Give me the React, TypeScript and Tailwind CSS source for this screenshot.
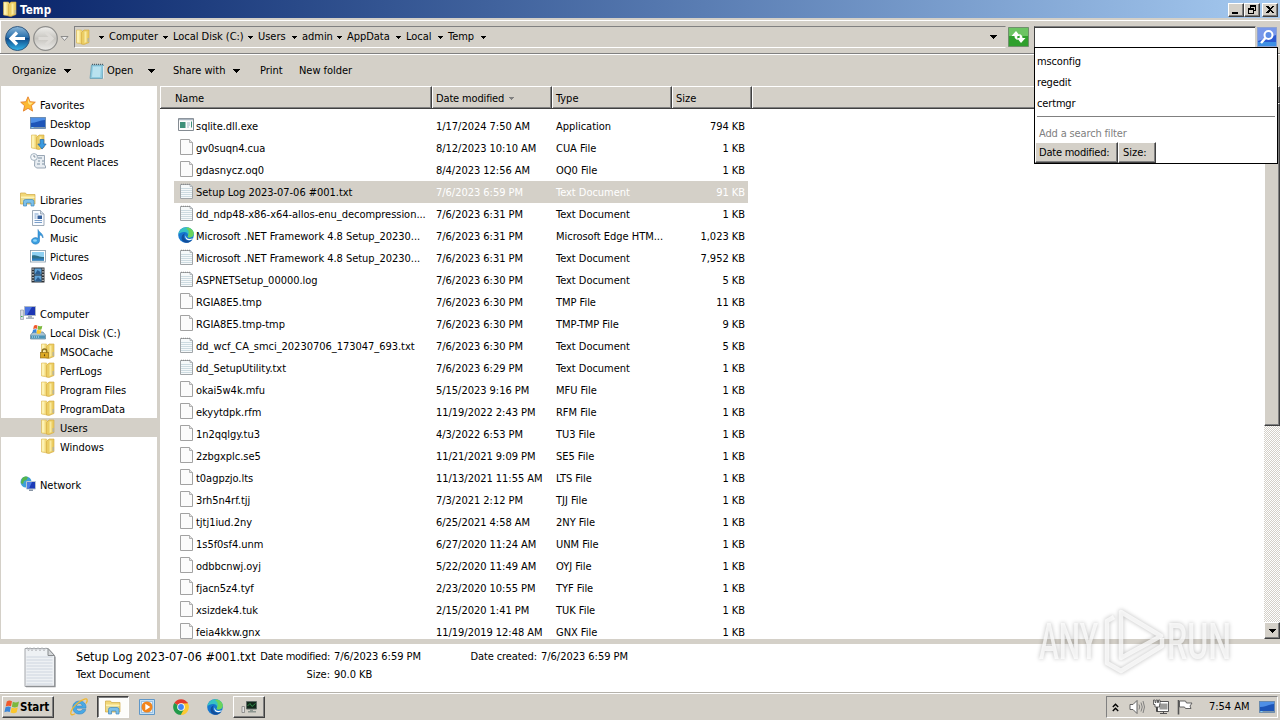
import type { ReactNode } from "react";

type IconProps = { className?: string };

const raised = "border border-t-white border-l-white border-r-[#404040] border-b-[#404040] bg-[#d4d0c8] shadow-[inset_-1px_-1px_0_#808080]";

function FolderIcon({ className = "size-4" }: IconProps) {
  return (
    <svg viewBox="0 0 16 16" className={className}>
      <path d="M1.500 1h5l1 2v12l-6-1z" fill="#f3da7c" stroke="#dcb858" strokeWidth=".6" />
      <path d="M2 1.500h2.500v12H2z" fill="#fdf2b4" />
      <path d="M6.500 3.500 9 1h5v12.500l-5 2-2.500-.5z" fill="#ebcd63" stroke="#d1a63c" strokeWidth=".6" />
      <path d="M9.500 2.500h2V13l-2 1z" fill="#faeaa0" />
      <path d="M12.500 9h1.500v4h-1.500z" fill="#b9b59a" />
    </svg>
  );
}

function LockedFolderIcon() {
  return (
    <span className="relative flex size-4">
      <FolderIcon />
      <svg viewBox="0 0 10 12" className="absolute bottom-0 left-0 h-3 w-[9px]">
        <path d="M2.500 6V4a2.500 2.500 0 0 1 5 0v2" fill="none" stroke="#8f7322" strokeWidth="1.500" />
        <rect x=".5" y="5.500" width="9" height="6" fill="#dca925" stroke="#9a741a" strokeWidth=".8" />
        <path d="M5 7.500v2" stroke="#5d430c" strokeWidth="1.200" />
      </svg>
    </span>
  );
}

function StarIcon() {
  return (
    <svg viewBox="0 0 16 16" className="size-4">
      <path d="m8 .8 2.100 4.900 5.200.5-3.900 3.500 1.200 5.400L8 12.300l-4.600 2.800 1.200-5.400L.7 6.200l5.200-.5z" fill="#fcb931" stroke="#e5812b" strokeWidth=".9" />
      <path d="m8 2.500 1.500 4 3.500.2-3 2.300-2-2z" fill="#ffe68b" />
    </svg>
  );
}

function DesktopIcon({ className = "size-4" }: IconProps) {
  return (
    <svg viewBox="0 0 16 16" className={className}>
      <rect x=".5" y="2.500" width="15" height="11" fill="#1d55b8" stroke="#6688aa" strokeWidth=".8" />
      <path d="M1 3h14v2C10 5 6 8 1 8z" fill="#4e8fe6" />
      <path d="M1 12h14v1.500H1z" fill="#7e97ad" />
      <path d="M1.500 12h2v1h-2z" fill="#7fd0ff" />
    </svg>
  );
}

function DownloadsIcon() {
  return (
    <span className="relative flex size-4">
      <FolderIcon />
      <svg viewBox="0 0 10 12" className="absolute -right-px bottom-0 h-[11px] w-[10px]">
        <path d="M3 .5h4v5h2.500L5 11 .5 5.500H3z" fill="#3a9be0" stroke="#1f64ac" strokeWidth=".8" />
      </svg>
    </span>
  );
}

function RecentIcon() {
  return (
    <svg viewBox="0 0 16 16" className="size-4">
      <path d="M5 2.500h9.500v9.500l1 1v2H6.500l-2-2z" fill="#e8edf2" stroke="#8393a3" strokeWidth=".8" />
      <path d="M8 5h4M8 8h2m2 0h2M7 11h3m2 0h2" stroke="#7b8fa1" />
      <circle cx="4" cy="4" r="3.400" fill="#f7f9fb" stroke="#8fa2b3" strokeWidth=".8" />
      <path d="M4 2v2h1.500" fill="none" stroke="#55697c" strokeWidth=".7" />
    </svg>
  );
}

function LibraryIcon({ className = "size-4" }: IconProps) {
  return (
    <svg viewBox="0 0 16 16" className={className}>
      <path d="M.5 2h5l1 1.500H15v9.500H.5z" fill="#f2d878" stroke="#cfa842" strokeWidth=".7" />
      <path d="M1 5.500h13.500V7H1z" fill="#fff2b5" />
      <path d="M1.500 7h12v4h-12z" fill="#e4dc98" />
      <path d="M3.500 15v-4.500q0-2 2-2h6.500q2 0 2 2V15h-3v-3H6.500v3z" fill="#7cc0ea" stroke="#3f87bd" strokeWidth=".7" />
    </svg>
  );
}

function DocumentsIcon() {
  return (
    <svg viewBox="0 0 16 16" className="size-4">
      <path d="M2.500.5h8l3.500 3.500v11.500H2.500z" fill="#f8fbff" stroke="#8796a6" strokeWidth=".8" />
      <path d="M10.500.5v3.500H14" fill="#d4dee8" stroke="#8796a6" strokeWidth=".7" />
      <path d="M4.500 4h4M4.500 6h2M4.500 8h2M4.500 10.500h7.500M4.500 12.500h7.500" stroke="#6c94c4" strokeWidth=".9" />
      <path d="M7.500 5.500h4.500v3.500H7.500z" fill="#36609c" />
    </svg>
  );
}

function MusicIcon() {
  return (
    <svg viewBox="0 0 16 16" className="size-4">
      <path d="M8 .5c.5 3 5.500 3.500 5 8.500-.8-2-2-3-3.500-3v6.200A4 3.300 0 1 1 8 9.300z" fill="#3b9fe0" stroke="#1c6db5" strokeWidth=".5" />
      <ellipse cx="5" cy="11.500" rx="2" ry="1.300" fill="#8fd5fa" />
    </svg>
  );
}

function PicturesIcon() {
  return (
    <svg viewBox="0 0 16 16" className="size-4">
      <rect x=".5" y="2.500" width="15" height="11.500" fill="#fff" stroke="#8698a8" strokeWidth=".8" />
      <path d="M2 4h12v8.500H2z" fill="#8fd0f2" />
      <path d="M2 7.500c4-1 6 1.500 12 1.500v3.500H2z" fill="#2e6f88" />
      <path d="M2 10.500h12v2H2z" fill="#2d7cc0" />
    </svg>
  );
}

function VideosIcon() {
  return (
    <svg viewBox="0 0 16 16" className="size-4">
      <path d="M1.500.5h13v15h-13z" fill="#2c3136" />
      <path d="M4.500 1.500h7v6h-7zM4.500 8.500h7v6h-7z" fill="#5fa3d9" />
      <path d="m5 7 2.500-4 3 2v2.500zM5 14l3-4 3 3v1z" fill="#2b5e92" />
      <path d="M3 1.500v14M13 1.500v14" stroke="#e8e8e8" strokeWidth="1.300" strokeDasharray="1.300 1.500" />
    </svg>
  );
}

function ComputerIcon() {
  return (
    <svg viewBox="0 0 16 16" className="size-4">
      <path d="M.5 5h3v9.500h-3z" fill="#d6dbe2" stroke="#8791a0" strokeWidth=".6" />
      <path d="M1 11.500h1.500" stroke="#34b24a" />
      <path d="M4.500 1.500h11v9h-11z" fill="#1c36b4" stroke="#aeb8c4" />
      <path d="M5 2h7L7 10H5z" fill="#4a73e2" />
      <path d="M8 11h4v1.500h2V14H6v-1.500h2z" fill="#a9b3bf" />
    </svg>
  );
}

function WindowsFlag({ className }: IconProps) {
  return (
    <svg viewBox="0 0 16 16" className={className}>
      <path d="M2.800 2.500C4.800 1 6.500 1.500 8 2.300L7 7.300C5.500 6.500 3.500 6.400 1.700 7.500z" fill="#f0592b" />
      <path d="M8.800 2.700c2 1 4 1 6.200-.3L13.900 7.500c-2 1.300-4.200 1.200-6 .2z" fill="#7cb83c" />
      <path d="M1.500 8.300C3.300 7.300 5.300 7.300 6.800 8.100l-1 5C4.300 12.300 2.500 12.200.4 13.300z" fill="#3b86d8" />
      <path d="M7.600 8.500c2 1 4.200 1 6.200-.2l-1.100 5c-2 1.300-4.200 1.200-6.100.2z" fill="#fbc62d" />
    </svg>
  );
}

function DiskIcon() {
  return (
    <span className="relative flex size-4">
      <svg viewBox="0 0 16 16" className="size-4">
        <path d="M3 8h10l2.500 3v4H.5v-4z" fill="#a8c3d2" stroke="#5f7f93" strokeWidth=".7" />
        <path d="M1 11.500h14v3H1z" fill="#4b94b8" />
        <path d="M2 13h7" stroke="#cce9f5" strokeDasharray="1 1" />
      </svg>
      <WindowsFlag className="absolute top-0 left-[2px] size-[11px]" />
    </span>
  );
}

function NetworkIcon() {
  return (
    <svg viewBox="0 0 16 16" className="size-4">
      <circle cx="6" cy="6" r="5.500" fill="#3f9fda" />
      <path d="M2 2.500C4 0 7 .5 8 1L6.500 4 4 5 3 8 .8 7zM6 7l3-1v4l-2 1.500z" fill="#55b54c" />
      <path d="M6.500 5.500h9v7.500h-9z" fill="#1b3bb8" stroke="#b9c6d2" />
      <path d="M7 6h5l-3 6.500H7z" fill="#4b7be4" />
      <path d="M9 13.500h4V15H9z" fill="#8895a4" />
    </svg>
  );
}

function FileIcon() {
  return (
    <svg viewBox="0 0 16 16" className="size-4">
      <path d="M2.500.5h9l3 3v12h-12z" fill="#fbfbfb" stroke="#a2a2a2" />
      <path d="M11.500.5v3h3" fill="#e3e3e3" stroke="#a2a2a2" strokeWidth=".8" />
    </svg>
  );
}

function TextIcon({ className = "size-4" }: IconProps) {
  return (
    <svg viewBox="0 0 16 16" className={className}>
      <path d="M2.500 1.500H12l2.500 2v12h-12z" fill="#f6f9fa" stroke="#a0a5a8" />
      <path d="M3 5.500h11M3 7.500h11M3 9.500h11M3 11.500h11M3 13.500h11" stroke="#c3d3da" strokeWidth=".8" />
      <path d="M3 1.300h9" stroke="#8d8d8d" strokeWidth="1.200" strokeDasharray="1 1" />
      <path d="M12 1.500v2h2.500" fill="#d8dfe3" stroke="#a0a5a8" strokeWidth=".7" />
    </svg>
  );
}

// notepad shown in the toolbar, bluer than the list icon
function NotepadIcon() {
  return (
    <svg viewBox="0 0 16 16" className="ml-[18px] size-4">
      <path d="M2.500 2h12l-1 13.500H1z" fill="#8ecbe0" stroke="#6aa0b5" strokeWidth=".8" />
      <path d="M4 3.500h8l-.8 10.500H3z" fill="#b9e2ef" />
      <path d="M3 1.300h11" stroke="#4f5f68" strokeWidth="1.300" strokeDasharray="1 1" />
      <path d="M14.500 3v12.500" stroke="#f5f5f5" strokeWidth=".8" />
    </svg>
  );
}

function ExeIcon() {
  return (
    <svg viewBox="0 0 16 16" className="size-4">
      <path d="M.5 1.500h15v12H.5z" fill="#fbfbfb" stroke="#848b92" />
      <path d="M1 2.500h14" stroke="#a9b4bf" strokeWidth="1.500" />
      <path d="M2 5h5.500v6H2z" fill="#3d8f78" />
      <path d="M9 6h3M9 8h3M9 10h2" stroke="#9fb5c2" />
      <path d="M13.500 4.500v6" stroke="#3d8f78" />
    </svg>
  );
}

function EdgeIcon({ className = "size-4" }: IconProps) {
  return (
    <svg viewBox="0 0 16 16" className={className}>
      <circle cx="8" cy="8" r="7.800" fill="#1677cf" />
      <path d="M.3 7.500C1 3 4.500.2 8.300.2c4.500 0 7.500 3.300 7.500 6.300 0 2.500-2 4-4.200 4-1.600 0-2.500-.7-1.600-1.800C10.500 6.500 8.500 5 6 5 3.500 5 1.300 6 .3 7.500z" fill="#36c2c4" />
      <path d="M10 .5c3.700.9 5.800 3.600 5.800 6 0 2.500-2 4-4.200 4-1.600 0-2.500-.7-1.600-1.800C11.500 6 11 3 8 1z" fill="#6bd35c" />
      <path d="M5.800 9c0 3 3 5.500 6.500 4.500 1-.2 1.700-.6 2.200-.8-1.500 2.200-4 3.200-6.500 3.100-2.700-.2-5-2.800-4.300-6C4.200 7.500 6 6.500 7.500 6.500 6.500 7 5.800 8 5.800 9z" fill="#124e9c" />
      <path d="M8 8.500c-.5 2.500 2 4.500 7 2.800-.8 1.300-2.500 2-4 1.900-2.800-.2-4.500-2.700-3-4.700z" fill="#fff" />
    </svg>
  );
}

function IeIcon() {
  return (
    <svg viewBox="0 0 20 20" className="size-5">
      <path d="M16.800 12.500h-3.500c-.6 1-1.500 1.600-2.900 1.600-1.900 0-3-1.100-3.100-2.900H17c.4-4.200-2.200-7.200-6.500-7.200-4 0-6.800 2.800-6.800 6.600s2.800 6.500 6.800 6.500c3.200 0 5.500-1.700 6.300-4.600zM7.400 9c.3-1.500 1.400-2.400 3-2.400s2.700.9 2.900 2.400z" fill="#48a9e6" stroke="#2678b8" strokeWidth=".5" />
      <path d="M17 6.500c2-3 1.500-5.300-1.500-4.400C10.500 3.500 3.500 10 2 14.500c-1 3.500 1 4 4 2.300" fill="none" stroke="#f0b72f" strokeWidth="1.300" />
    </svg>
  );
}

function PlayerIcon() {
  return (
    <svg viewBox="0 0 16 16" className="size-4">
      <path d="M.5.500h15v15H.5z" fill="#c5e0f4" stroke="#5f97c8" />
      <path d="M2.500 2.500h11v11h-11z" fill="#e8f3fb" stroke="#6ea6d6" strokeWidth=".6" />
      <circle cx="8" cy="8" r="5.500" fill="#f2851d" />
      <path d="m6.300 4.800 5 3.200-5 3.200z" fill="#fff" />
    </svg>
  );
}

function ChromeIcon() {
  return (
    <svg viewBox="0 0 16 16" className="size-4">
      <path d="M8 8 1.240 4.100A7.800 7.800 0 0 1 14.760 4.100z" fill="#e33b2e" />
      <path d="M8 8 14.760 4.100A7.800 7.800 0 0 1 8 15.800z" fill="#fcc934" />
      <path d="M8 8v7.800A7.800 7.800 0 0 1 1.240 4.100z" fill="#229a4a" />
      <path d="M8 4.300h6.900L11 10z" fill="#fcc934" />
      <path d="M8 4.300h6.800l-.5-1H6z" fill="#e33b2e" />
      <path d="M4.800 10 8 15.800 11.300 10z" fill="#229a4a" />
      <path d="M8 15.800 11.300 10h3.500A7.800 7.800 0 0 1 8 15.800z" fill="#fcc934" />
      <circle cx="8" cy="8" r="3.800" fill="#fff" />
      <circle cx="8" cy="8" r="2.900" fill="#4285f4" />
    </svg>
  );
}

function MonitorAppIcon() {
  return (
    <svg viewBox="0 0 18 16" className="h-4 w-[18px]">
      <path d="M6.500 2.500h10v7.500h-10z" fill="#10261a" stroke="#5e6a66" />
      <path d="M7.500 7 10 4.500l2 3 3.500-3" fill="none" stroke="#2f8a48" />
      <path d="M10 10.500h3v1.500h3v1.500H8V12h2z" fill="#8d9690" />
      <path d="M2 7.500h2.500v6H2z" fill="#e2e2e2" stroke="#777" strokeWidth=".7" />
    </svg>
  );
}

function Caret() {
  return (
    <svg viewBox="0 0 7 4" className="h-1 w-[7px] shrink-0" shapeRendering="crispEdges">
      <path d="M0 0h7L3.500 4z" />
    </svg>
  );
}

function SmallCaret({ className = "fill-black" }: IconProps) {
  return (
    <svg viewBox="0 0 5 3" className={`h-[3px] w-[5px] shrink-0 ${className}`} shapeRendering="crispEdges">
      <path d="M0 0h5v1H4v1H3v1H2V2H1V1H0z" />
    </svg>
  );
}

function CaptionButton({ children }: { children: ReactNode }) {
  return (
    <button className={`flex h-[14px] w-4 items-center justify-center ${raised}`}>
      <svg viewBox="0 0 12 10" className="h-[10px] w-3" shapeRendering="crispEdges">{children}</svg>
    </button>
  );
}

function TitleBar() {
  return (
    <div className="flex h-[18px] shrink-0 items-center bg-linear-to-r from-[#0a246a] to-[#a6caf0] pr-[2px] pl-[2px]">
      <FolderIcon />
      <span className="ml-[2px] pt-px text-[11.500px] font-bold tracking-[0.1px] text-white">Temp</span>
      <div className="ml-auto flex pt-px">
        <CaptionButton><path d="M2 7h6v2H2z" /></CaptionButton>
        <CaptionButton>
          <path d="M4 0h6v6H8V5h1V2H5v1H4zM2 3h6v6H2zm1 2v3h4V5z" fillRule="evenodd" />
        </CaptionButton>
        <span className="w-[2px]" />
        <CaptionButton><path d="M2 1h2l2 2 2-2h2L7 4.500 10 8H8L6 6 4 8H2l3-3.500z" /></CaptionButton>
      </div>
    </div>
  );
}

const crumbs = [
  { label: "Computer", width: "w-[64px]" },
  { label: "Local Disk (C:)", width: "w-[85px]" },
  { label: "Users", width: "w-[44px]" },
  { label: "admin", width: "w-[45px]" },
  { label: "AppData", width: "w-[59px]" },
  { label: "Local", width: "w-[42px]" },
  { label: "Temp", width: "w-[43px]" },
];

function AddressBar() {
  return (
    <div className="flex h-[33px] shrink-0 items-start border-t border-l border-white pt-[5px]">
      <svg viewBox="0 0 70 26" className="ml-[3px] h-[26px] w-[70px] shrink-0">
        <defs>
          <linearGradient id="back" x1="0" y1="0" x2="0" y2="1">
            <stop offset="0" stopColor="#8ab7da" />
            <stop offset=".45" stopColor="#2a70ab" />
            <stop offset=".5" stopColor="#0d4a8a" />
            <stop offset="1" stopColor="#35b5ea" />
          </linearGradient>
          <linearGradient id="forward" x1="0" y1="0" x2="0" y2="1">
            <stop offset="0" stopColor="#f0efec" />
            <stop offset=".5" stopColor="#c7c5c0" />
            <stop offset="1" stopColor="#ecebe8" />
          </linearGradient>
        </defs>
        <circle cx="13.500" cy="12.500" r="12" fill="url(#back)" stroke="#33597f" />
        <path d="M13 6.500 7 12.500l6 6M7.500 12.500H21" fill="none" stroke="#fff" strokeWidth="3.200" />
        <circle cx="41.500" cy="12.500" r="11.800" fill="url(#forward)" stroke="#8d8d8b" strokeWidth="1.200" />
        <path d="m42 6.500 6 6-6 6M47.500 12.500H34.500" fill="none" stroke="#dddbd7" strokeWidth="3" />
        <path d="M57 10.500h7l-3.500 4z" fill="#eee" stroke="#777" strokeWidth=".8" />
      </svg>
      <div className="flex h-[22px] w-[932px] items-center border border-t-[#808080] border-r-[#d4d0c8] border-b-white border-l-[#808080]">
        <FolderIcon />
        <span className="ml-[8px] flex w-[10px]"><SmallCaret /></span>
        {crumbs.map((c) => (
          <span key={c.label} className={`flex shrink-0 items-center justify-between pr-[5px] ${c.width}`}>
            <span className="whitespace-nowrap">{c.label}</span>
            <SmallCaret />
          </span>
        ))}
        <span className="mr-2 ml-auto flex"><Caret /></span>
      </div>
      <svg viewBox="0 0 21 20" className="mt-px ml-[2px] h-5 w-[21px] shrink-0">
        <path d="M.5.500h20v19H.5z" fill="#2fa02d" stroke="#6f8f6c" />
        <path d="M1 1h19v8H1z" fill="#6cc463" />
        <path d="M8 4 3.500 9H6.500c0 2 1 3.500 3.500 4-1-2-.8-3-.5-4H12z" fill="#fff" />
        <path d="m13 16 4.500-5h-3c0-2-1-3.500-3.500-4 1 2 .8 3 .5 4H9z" fill="#fff" />
      </svg>
      <div className="ml-[5px] h-[22px] w-[222px] border border-[#d4d0c8] border-t-[#808080] border-l-[#404040] bg-white shadow-[inset_0_1px_0_#404040]" />
      <svg viewBox="0 0 20 20" className="mt-px ml-px h-5 w-5 shrink-0">
        <path d="M.5.500h19v19H.5z" fill="#2c59d0" stroke="#8fa3d2" />
        <path d="M1 1h18v7L1 14z" fill="#7898ea" />
        <path d="M1 15h18v4H1z" fill="#3d8fe4" />
        <circle cx="11.500" cy="8" r="4" fill="#5d8de6" stroke="#fff" strokeWidth="2" />
        <path d="m8.500 11-4.500 5" stroke="#fff" strokeWidth="2.500" />
      </svg>
    </div>
  );
}

function Toolbar() {
  return (
    <div className="flex h-[32px] shrink-0 items-center border-t border-white pl-3 shadow-[0_-1px_0_#808080]">
      <span className="w-[52px]">Organize</span>
      <Caret />
      <NotepadIcon />
      <span className="ml-[2px] w-[41px]">Open</span>
      <Caret />
      <span className="ml-[18px] w-[60px] whitespace-nowrap">Share with</span>
      <Caret />
      <span className="ml-5 w-[39px]">Print</span>
      <span>New folder</span>
    </div>
  );
}

type NavItem = { label: string; icon: ReactNode; level: 0 | 1 | 2; active?: boolean } | null;

const navItems: NavItem[] = [
  { label: "Favorites", icon: <StarIcon />, level: 0 },
  { label: "Desktop", icon: <DesktopIcon />, level: 1 },
  { label: "Downloads", icon: <DownloadsIcon />, level: 1 },
  { label: "Recent Places", icon: <RecentIcon />, level: 1 },
  null,
  { label: "Libraries", icon: <LibraryIcon />, level: 0 },
  { label: "Documents", icon: <DocumentsIcon />, level: 1 },
  { label: "Music", icon: <MusicIcon />, level: 1 },
  { label: "Pictures", icon: <PicturesIcon />, level: 1 },
  { label: "Videos", icon: <VideosIcon />, level: 1 },
  null,
  { label: "Computer", icon: <ComputerIcon />, level: 0 },
  { label: "Local Disk (C:)", icon: <DiskIcon />, level: 1 },
  { label: "MSOCache", icon: <LockedFolderIcon />, level: 2 },
  { label: "PerfLogs", icon: <FolderIcon />, level: 2 },
  { label: "Program Files", icon: <FolderIcon />, level: 2 },
  { label: "ProgramData", icon: <FolderIcon />, level: 2 },
  { label: "Users", icon: <FolderIcon />, level: 2, active: true },
  { label: "Windows", icon: <FolderIcon />, level: 2 },
  null,
  { label: "Network", icon: <NetworkIcon />, level: 0 },
];

const indent = ["pl-[19px]", "pl-[29px]", "pl-[39px]"];

function Sidebar() {
  return (
    <nav className="ml-px w-[156px] shrink-0 bg-white pt-[9px]">
      {navItems.map((item, i) =>
        item ? (
          <div key={i} className={`flex h-[19px] items-center gap-1 ${indent[item.level]} ${item.active ? "bg-[#d4d0c8]" : ""}`}>
            <span className="flex pb-px">{item.icon}</span>
            <span className="pt-[3px] whitespace-nowrap">{item.label}</span>
          </div>
        ) : (
          <div key={i} className="h-[19px]" />
        )
      )}
    </nav>
  );
}

type Kind = "exe" | "file" | "text" | "edge";

const files: { name: string; date: string; type: string; size: string; kind: Kind }[] = [
  { name: "sqlite.dll.exe", date: "1/17/2024 7:50 AM", type: "Application", size: "794 KB", kind: "exe" },
  { name: "gv0suqn4.cua", date: "8/12/2023 10:10 AM", type: "CUA File", size: "1 KB", kind: "file" },
  { name: "gdasnycz.oq0", date: "8/4/2023 12:56 AM", type: "OQ0 File", size: "1 KB", kind: "file" },
  { name: "Setup Log 2023-07-06 #001.txt", date: "7/6/2023 6:59 PM", type: "Text Document", size: "91 KB", kind: "text" },
  { name: "dd_ndp48-x86-x64-allos-enu_decompression...", date: "7/6/2023 6:31 PM", type: "Text Document", size: "1 KB", kind: "text" },
  { name: "Microsoft .NET Framework 4.8 Setup_20230...", date: "7/6/2023 6:31 PM", type: "Microsoft Edge HTM...", size: "1,023 KB", kind: "edge" },
  { name: "Microsoft .NET Framework 4.8 Setup_20230...", date: "7/6/2023 6:31 PM", type: "Text Document", size: "7,952 KB", kind: "text" },
  { name: "ASPNETSetup_00000.log", date: "7/6/2023 6:30 PM", type: "Text Document", size: "5 KB", kind: "text" },
  { name: "RGIA8E5.tmp", date: "7/6/2023 6:30 PM", type: "TMP File", size: "11 KB", kind: "file" },
  { name: "RGIA8E5.tmp-tmp", date: "7/6/2023 6:30 PM", type: "TMP-TMP File", size: "9 KB", kind: "file" },
  { name: "dd_wcf_CA_smci_20230706_173047_693.txt", date: "7/6/2023 6:30 PM", type: "Text Document", size: "5 KB", kind: "text" },
  { name: "dd_SetupUtility.txt", date: "7/6/2023 6:29 PM", type: "Text Document", size: "1 KB", kind: "text" },
  { name: "okai5w4k.mfu", date: "5/15/2023 9:16 PM", type: "MFU File", size: "1 KB", kind: "file" },
  { name: "ekyytdpk.rfm", date: "11/19/2022 2:43 PM", type: "RFM File", size: "1 KB", kind: "file" },
  { name: "1n2qqlgy.tu3", date: "4/3/2022 6:53 PM", type: "TU3 File", size: "1 KB", kind: "file" },
  { name: "2zbgxplc.se5", date: "11/21/2021 9:09 PM", type: "SE5 File", size: "1 KB", kind: "file" },
  { name: "t0agpzjo.lts", date: "11/13/2021 11:55 AM", type: "LTS File", size: "1 KB", kind: "file" },
  { name: "3rh5n4rf.tjj", date: "7/3/2021 2:12 PM", type: "TJJ File", size: "1 KB", kind: "file" },
  { name: "tjtj1iud.2ny", date: "6/25/2021 4:58 AM", type: "2NY File", size: "1 KB", kind: "file" },
  { name: "1s5f0sf4.unm", date: "6/27/2020 11:24 AM", type: "UNM File", size: "1 KB", kind: "file" },
  { name: "odbbcnwj.oyj", date: "5/22/2020 11:49 AM", type: "OYJ File", size: "1 KB", kind: "file" },
  { name: "fjacn5z4.tyf", date: "2/23/2020 10:55 PM", type: "TYF File", size: "1 KB", kind: "file" },
  { name: "xsizdek4.tuk", date: "2/15/2020 1:41 PM", type: "TUK File", size: "1 KB", kind: "file" },
  { name: "feia4kkw.gnx", date: "11/19/2019 12:48 AM", type: "GNX File", size: "1 KB", kind: "file" },
];

const fileIcons = { exe: ExeIcon, file: FileIcon, text: TextIcon, edge: EdgeIcon };

const headCell = "flex items-center pt-[2px] border-t border-l border-t-white border-l-white border-r border-r-[#404040] shadow-[inset_-1px_0_0_#808080]";

function FileList() {
  return (
    <div className="flex min-w-0 flex-1 flex-col bg-white">
      <div className="flex h-[23px] shrink-0 border-b border-[#404040] bg-[#d4d0c8] shadow-[inset_0_-1px_0_#808080]">
        <div className={`w-[272px] pl-[14px] ${headCell}`}>Name</div>
        <div className={`w-[120px] gap-[5px] pl-[3px] ${headCell}`}>
          <span className="tracking-[-0.15px]">Date modified</span>
          <SmallCaret className="fill-[#808080]" />
        </div>
        <div className={`w-[120px] pl-[3px] ${headCell}`}>Type</div>
        <div className={`w-[80px] pl-[3px] ${headCell}`}>Size</div>
        <div className="flex-1 border-t border-l border-white" />
      </div>
      <div className="min-h-0 flex-1 overflow-hidden pt-[6px] pl-[14px]">
        {files.map((f, i) => {
          const Icon = fileIcons[f.kind];
          return (
            <div key={i} className={`flex h-[22px] w-[574px] items-center ${i === 3 ? "bg-[#d4d0c8]" : ""}`}>
              <span className="ml-1 flex w-[18px] pb-[2px]"><Icon /></span>
              <span className="w-[240px] pt-px whitespace-nowrap">{f.name}</span>
              <span className={`flex flex-1 pt-px whitespace-nowrap ${i === 3 ? "text-white" : ""}`}>
                <span className="w-[120px]">{f.date}</span>
                <span className="w-[120px]">{f.type}</span>
                <span className="flex-1 pr-[3px] text-right">{f.size}</span>
              </span>
            </div>
          );
        })}
      </div>
    </div>
  );
}

function Scrollbar() {
  return (
    <div className="flex w-4 shrink-0 flex-col bg-[repeating-conic-gradient(#d4d0c8_0_25%,#fff_0_50%)] bg-[length:2px_2px]">
      <div className={`h-[17px] ${raised}`} />
      <div className={`h-[323px] ${raised}`} />
      <div className={`mt-auto flex h-[17px] items-center justify-center ${raised}`}>
        <Caret />
      </div>
    </div>
  );
}

function SearchMenu() {
  return (
    <div className="absolute top-[47px] left-[1034px] h-[117px] w-[244px] border border-black bg-white pt-[3px]">
      {["msconfig", "regedit", "certmgr"].map((s) => (
        <div key={s} className="flex h-[21px] items-center pl-[2px] tracking-[-0.15px]">{s}</div>
      ))}
      <div className="mx-[2px] mt-[2px] border-t border-[#808080]" />
      <div className="flex h-[25px] items-end pb-px pl-1 tracking-[-0.15px] text-[#808080]">Add a search filter</div>
      <div className="flex">
        <button className={`h-[21px] w-[83px] pl-[3px] text-left tracking-[-0.22px] ${raised}`}>Date modified:</button>
        <button className={`h-[21px] w-[38px] pl-1 text-left ${raised}`}>Size:</button>
      </div>
    </div>
  );
}

function LargeTextIcon() {
  return (
    <svg viewBox="0 0 32 42" className="mt-[2px] h-[42px] w-8">
      <path d="M1 2.500h23l6.500 7v31H1z" fill="#eef1f4" stroke="#a3a6aa" />
      <path d="M2.500 11h26M2.500 14h26M2.500 17h26M2.500 20h26M2.500 23h26M2.500 26h26M2.500 29h26M2.500 32h26M2.500 35h26M2.500 38h26" stroke="#c9d3dc" strokeWidth=".9" />
      <path d="m3 1 1.500 4L6 1.500 8 5l2-3.500L12 5l2-3.500L16 5l2-3.500L20 5l2-3.500" fill="none" stroke="#b5b8bb" strokeWidth=".8" />
      <path d="M24 2.500v7h6.500z" fill="#d5d8da" stroke="#898c8f" />
      <path d="M2 40.500h29v-30" fill="none" stroke="#8e9194" strokeWidth="1.300" />
    </svg>
  );
}

function DetailsPane() {
  return (
    <div className="flex h-[53px] shrink-0 border-t-[5px] border-[#d4d0c8] bg-white pl-6 whitespace-nowrap">
      <LargeTextIcon />
      <div className="ml-5 w-[184px] pt-[4px] leading-[18px]">
        <div className="text-[12.500px] tracking-[0.03px]">Setup Log 2023-07-06 #001.txt</div>
        <div>Text Document</div>
      </div>
      <div className="grid h-10 grid-cols-[70px_131px_68px_90px] gap-x-1 pt-[4px] leading-[18px]">
        <span className="text-right tracking-[-0.26px]">Date modified:</span>
        <span>7/6/2023 6:59 PM</span>
        <span className="text-right tracking-[-0.1px]">Date created:</span>
        <span>7/6/2023 6:59 PM</span>
        <span className="text-right">Size:</span>
        <span>90.0 KB</span>
      </div>
    </div>
  );
}

function Taskbar() {
  return (
    <div className="flex h-[28px] shrink-0 items-center border-t border-[#b5b2ab] bg-[#d4d0c8] pt-px pr-[2px] pl-[2px] shadow-[inset_0_1px_0_#fff]">
      <button className={`flex h-[22px] w-[52px] items-center pl-px ${raised}`}>
        <WindowsFlag className="size-4" />
        <span className="text-[11.500px] font-bold">Start</span>
      </button>
      <span className="ml-[15px] flex"><IeIcon /></span>
      <div className="ml-[8px] flex h-[22px] w-8 items-center justify-center border border-t-[#404040] border-r-white border-b-white border-l-[#404040] bg-[#fdfdfb] shadow-[inset_1px_1px_0_#808080]">
        <LibraryIcon />
      </div>
      <span className="ml-[10px] flex"><PlayerIcon /></span>
      <span className="ml-[18px] flex"><ChromeIcon /></span>
      <span className="ml-[18px] flex"><EdgeIcon /></span>
      <button className={`ml-[10px] flex h-[22px] w-8 items-center justify-center ${raised}`}>
        <MonitorAppIcon />
      </button>
      <div className="ml-auto flex h-[22px] w-[172px] items-center border border-t-[#808080] border-r-white border-b-white border-l-[#808080]">
        <svg viewBox="0 0 7 9" className="ml-[5px] h-[9px] w-[7px]">
          <path d="m.8 4 2.700-2.700L6.200 4M.8 8l2.700-2.700L6.200 8" fill="none" stroke="#000" strokeWidth="1.400" />
        </svg>
        <svg viewBox="0 0 16 16" className="ml-[10px] size-4">
          <path d="M1 5.500h3l4-4v13l-4-4H1z" fill="#fff" stroke="#555" strokeWidth=".9" />
          <path d="M10 5.500q1.500 2.500 0 5M12 3.500q2.500 4.500 0 9M14 2q3 6 0 12" fill="none" stroke="#777" strokeWidth=".9" />
        </svg>
        <svg viewBox="0 0 16 16" className="ml-2 size-4">
          <path d="M5.500 3.500h10v8h-10z" fill="#9c9c9a" stroke="#fff" strokeWidth="2" />
          <path d="M4.500 2.500h11v10h-11zM7 14.500h7M10.500 12.500v2" fill="none" stroke="#444" strokeWidth=".9" />
          <path d="M.5 1v4.500H2V8h4.500V5.500H7V1H5.500v2.500h-1V1H3v2.500H2V1z" fill="#fff" stroke="#444" strokeWidth=".8" />
          <path d="M3.500 8v4.500H5" fill="none" stroke="#444" />
        </svg>
        <svg viewBox="0 0 16 16" className="ml-2 size-4">
          <path d="M1.500 1v14.500" stroke="#555" strokeWidth="1.600" />
          <path d="M2.500 2h6l1 2H15l-2 3 1 2.500H8.500l-1-1.500h-5z" fill="#fff" stroke="#555" strokeWidth=".9" />
        </svg>
        <span className="ml-4 whitespace-nowrap">7:54 AM</span>
        <DesktopIcon className="ml-[10px] size-4" />
      </div>
    </div>
  );
}

function Watermark() {
  return (
    <svg viewBox="0 0 200 70" className="pointer-events-none absolute top-[606px] left-[1035px] h-[70px] w-[200px] overflow-visible drop-shadow-[0_0_2px_rgba(0,0,0,0.35)]">
      <g fill="#fff" fillOpacity=".75" fontFamily="Roboto, sans-serif" fontSize="50" fontWeight="500">
        <text x="4" y="53" textLength="59" lengthAdjust="spacingAndGlyphs">ANY</text>
        <text x="132" y="53" textLength="64" lengthAdjust="spacingAndGlyphs">RUN</text>
      </g>
      <g fill="none" stroke="#fff" strokeOpacity=".75" strokeWidth="4.500" strokeLinejoin="round">
        <path d="M86 6v46l40-22z" />
        <path d="M79 11l-7 4v42l14 8 41-25v-8" />
      </g>
    </svg>
  );
}

export default function App() {
  return (
    <div className="relative flex h-[720px] w-[1280px] flex-col overflow-hidden bg-[#d4d0c8] font-['DejaVu_Sans_Condensed','DejaVu_Sans',sans-serif] text-[11px] leading-[14px] tracking-[-0.03px] text-black">
      <TitleBar />
      <div className="h-[2px] shrink-0" />
      <AddressBar />
      <div className="h-px shrink-0" />
      <Toolbar />
      <div className="flex h-[553px] shrink-0">
        <Sidebar />
        <div className="w-[3px] shrink-0" />
        <FileList />
        <Scrollbar />
      </div>
      <DetailsPane />
      <Taskbar />
      <SearchMenu />
      <Watermark />
    </div>
  );
}
